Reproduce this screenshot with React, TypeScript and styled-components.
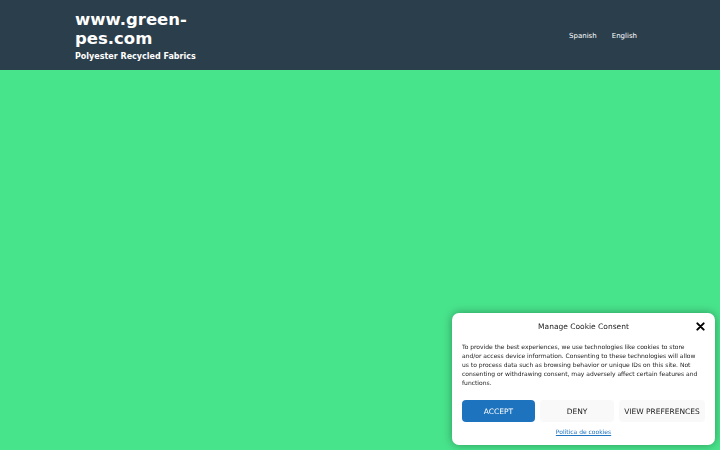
import React from "react";
import styled, { createGlobalStyle } from "styled-components";

const Global = createGlobalStyle`
  html, body { margin: 0; padding: 0; }
  body { background: #48e48c; font-family: "DejaVu Sans", sans-serif; }
`;

const Page = styled.div`
  min-height: 450px;
  background: #48e48c;
`;

const Header = styled.header`
  background: #2b3e4b;
  height: 70px;
  box-sizing: border-box;
  padding: 10px 83px 0 75px;
  display: flex;
  justify-content: space-between;
  align-items: flex-start;
`;

const Brand = styled.div`
  display: flex;
  flex-direction: column;
`;

const Title = styled.a`
  color: #fff;
  font-weight: bold;
  font-size: 16.5px;
  line-height: 19px;
  width: 120px;
  text-decoration: none;
`;

const Tagline = styled.div`
  color: #fff;
  font-weight: bold;
  font-size: 8px;
  margin-top: 4px;
`;

const Nav = styled.nav`
  display: flex;
  gap: 15px;
  margin-top: 22px;
`;

const NavLink = styled.a`
  color: #fff;
  font-size: 7px;
  text-decoration: none;
`;

const Banner = styled.div`
  position: fixed;
  right: 5px;
  bottom: 5px;
  width: 263px;
  height: 132px;
  box-sizing: border-box;
  background: #fff;
  border-radius: 7px;
  box-shadow: 0 0 10px rgba(0, 0, 0, 0.35);
  padding: 8px 12px 0 10px;
  display: flex;
  flex-direction: column;
  color: #222;
`;

const BannerHead = styled.div`
  position: relative;
  display: flex;
  justify-content: center;
  align-items: center;
  height: 10px;
  padding-left: 2px;
`;

const BannerTitle = styled.div`
  font-size: 7.5px;
  color: #222;
`;

const Close = styled.div`
  position: absolute;
  right: -2px;
  top: 0;
  width: 10px;
  height: 10px;
  display: flex;
  align-items: center;
  justify-content: center;
`;

const Body = styled.p`
  margin: 11px 0 0 0;
  font-size: 6px;
  line-height: 9px;
  color: #222;
`;

const Buttons = styled.div`
  display: grid;
  grid-template-columns: 73px 74px 86px;
  gap: 5px;
  margin-top: 13px;
`;

const Btn = styled.button<{ $primary?: boolean }>`
  height: 22px;
  border: none;
  border-radius: 4px;
  font-family: "DejaVu Sans", sans-serif;
  font-size: 7.5px;
  padding: 0;
  background: ${(p) => (p.$primary ? "#1e73be" : "#f9f9f9")};
  color: ${(p) => (p.$primary ? "#fff" : "#222")};
`;

const Policy = styled.a`
  align-self: center;
  margin-top: 6px;
  margin-left: 2px;
  font-size: 6px;
  color: #1e73be;
  text-decoration: underline;
`;

export default function App() {
  return (
    <Page>
      <Global />
      <Header>
        <Brand>
          <Title>www.green-pes.com</Title>
          <Tagline>Polyester Recycled Fabrics</Tagline>
        </Brand>
        <Nav>
          <NavLink>Spanish</NavLink>
          <NavLink>English</NavLink>
        </Nav>
      </Header>
      <Banner>
        <BannerHead>
          <BannerTitle>Manage Cookie Consent</BannerTitle>
          <Close>
            <svg width="9" height="9" viewBox="0 0 10 10" style={{ display: "block" }}>
              <path d="M1.5 1.5 L8.5 8.5 M8.5 1.5 L1.5 8.5" stroke="#000" strokeWidth="2.2" strokeLinecap="round" />
            </svg>
          </Close>
        </BannerHead>
        <Body>
          To provide the best experiences, we use technologies like cookies to store and/or access device
          information. Consenting to these technologies will allow us to process data such as browsing
          behavior or unique IDs on this site. Not consenting or withdrawing consent, may adversely affect
          certain features and functions.
        </Body>
        <Buttons>
          <Btn $primary>ACCEPT</Btn>
          <Btn>DENY</Btn>
          <Btn>VIEW PREFERENCES</Btn>
        </Buttons>
        <Policy>Política de cookies</Policy>
      </Banner>
    </Page>
  );
}
